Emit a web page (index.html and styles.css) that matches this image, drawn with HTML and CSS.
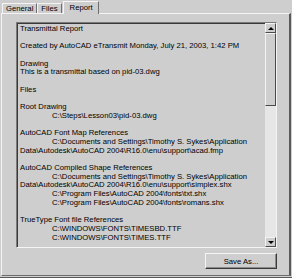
FILE: index.html
```html
<!DOCTYPE html>
<html lang="en">

<head>
  <meta charset="UTF-8">
  <meta name="viewport" content="width=device-width, initial-scale=1.0">
  <title>Transmittal Report</title>
  <link rel="stylesheet" href="styles.css">
</head>

<body>
  <div class="window">
    <!-- Tabs -->
    <div class="tabs">
      <div class="tab">General</div>
      <div class="tab">Files</div>
      <div class="tab active">Report</div>
    </div>

    <!-- Report page -->
    <div class="panel">
      <div class="report">
        <div class="report-text">
          <div class="line">Transmittal Report</div>
          <div class="line"></div>
          <div class="line">Created by AutoCAD eTransmit Monday, July 21, 2003, 1:42 PM</div>
          <div class="line"></div>
          <div class="line">Drawing</div>
          <div class="line">This is a transmittal based on pid-03.dwg</div>
          <div class="line"></div>
          <div class="line">Files</div>
          <div class="line"></div>
          <div class="line">Root Drawing</div>
          <div class="line indent">C:\Steps\Lesson03\pid-03.dwg</div>
          <div class="line"></div>
          <div class="line">AutoCAD Font Map References</div>
          <div class="line indent">C:\Documents and Settings\Timothy S. Sykes\Application</div>
          <div class="line">Data\Autodesk\AutoCAD 2004\R16.0\enu\support\acad.fmp</div>
          <div class="line"></div>
          <div class="line">AutoCAD Compiled Shape References</div>
          <div class="line indent">C:\Documents and Settings\Timothy S. Sykes\Application</div>
          <div class="line">Data\Autodesk\AutoCAD 2004\R16.0\enu\support\simplex.shx</div>
          <div class="line indent">C:\Program Files\AutoCAD 2004\fonts\txt.shx</div>
          <div class="line indent">C:\Program Files\AutoCAD 2004\fonts\romans.shx</div>
          <div class="line"></div>
          <div class="line">TrueType Font file References</div>
          <div class="line indent">C:\WINDOWS\FONTS\TIMESBD.TTF</div>
          <div class="line indent">C:\WINDOWS\FONTS\TIMES.TTF</div>
        </div>
        <div class="scrollbar">
          <div class="scroll-btn"><span class="arrow-up"></span></div>
          <div class="scroll-thumb"></div>
          <div class="scroll-track"></div>
          <div class="scroll-btn"><span class="arrow-down"></span></div>
        </div>
      </div>
      <div class="actions">
        <button class="btn">Save As...</button>
      </div>
    </div>
  </div>
</body>

</html>
```

FILE: styles.css
```css
body {
  margin: 0;
  padding: 0;
  background-color: #cecece;
  font-family: "Liberation Sans", Arial, sans-serif;
  font-size: 7.7px;
  color: #000000;
}

.window {
  width: 292px;
  height: 278px;
  box-sizing: border-box;
  padding: 1px 1px 1px 1px;
  display: flex;
  flex-direction: column;
  border-bottom: 1px solid #5a5a5a;
}

/* Tabs */
.tabs {
  display: flex;
  align-items: flex-end;
  height: 12px;
  padding-left: 1px;
}

.tab {
  height: 10px;
  line-height: 9px;
  padding: 0 3px 0 3px;
  border-top: 1px solid #f4f4f4;
  border-left: 1px solid #f4f4f4;
  border-right: 1px solid #6e6e6e;
  box-sizing: border-box;
}

.tab.active {
  height: 13px;
  line-height: 11px;
  padding: 0 5px 0 6px;
  margin-bottom: -1px;
  margin-left: 1px;
  background-color: #cecece;
  position: relative;
}

/* Panel */
.panel {
  flex: 1;
  border-top: 1px solid #f4f4f4;
  border-left: 1px solid #f4f4f4;
  border-right: 2px solid #5a5a5a;
  border-bottom: 1px solid #6e6e6e;
  padding: 8px 12px 5px 14px;
  display: flex;
  flex-direction: column;
}

.report {
  height: 226px;
  display: flex;
  border-top: 1px solid #7a7a7a;
  border-left: 1px solid #7a7a7a;
  border-right: 1px solid #f4f4f4;
  border-bottom: 1px solid #f4f4f4;
  box-sizing: border-box;
}

.report-text {
  flex: 1;
  border-top: 1px solid #3a3a3a;
  border-left: 1px solid #3a3a3a;
  padding: 1px 0 0 2px;
  overflow: hidden;
  white-space: nowrap;
}

.line {
  height: 8.7px;
  line-height: 8.7px;
}

.line.indent {
  padding-left: 32px;
}

/* Scrollbar */
.scrollbar {
  width: 11px;
  display: flex;
  flex-direction: column;
}

.scroll-btn,
.scroll-thumb {
  box-sizing: border-box;
  border-top: 1px solid #f4f4f4;
  border-left: 1px solid #f4f4f4;
  border-right: 1px solid #4a4a4a;
  border-bottom: 1px solid #4a4a4a;
  background-color: #cecece;
}

.scroll-btn {
  height: 10px;
  display: flex;
  align-items: center;
  justify-content: center;
}

.scroll-thumb {
  height: 73px;
}

.scroll-track {
  flex: 1;
  background-color: #e6e6e6;
}

.arrow-up,
.arrow-down {
  width: 0;
  height: 0;
  border-left: 3px solid transparent;
  border-right: 3px solid transparent;
}

.arrow-up {
  border-bottom: 3px solid #000000;
}

.arrow-down {
  border-top: 3px solid #000000;
}

/* Button */
.actions {
  display: flex;
  justify-content: flex-end;
  margin-top: 5px;
}

.btn {
  width: 72px;
  height: 16px;
  padding: 0;
  font-family: inherit;
  font-size: 7.7px;
  color: #000000;
  background-color: #cecece;
  border-top: 1px solid #f4f4f4;
  border-left: 1px solid #f4f4f4;
  border-right: 1px solid #3a3a3a;
  border-bottom: 1px solid #3a3a3a;
  box-shadow: inset -1px -1px 0 #8a8a8a;
}
```
